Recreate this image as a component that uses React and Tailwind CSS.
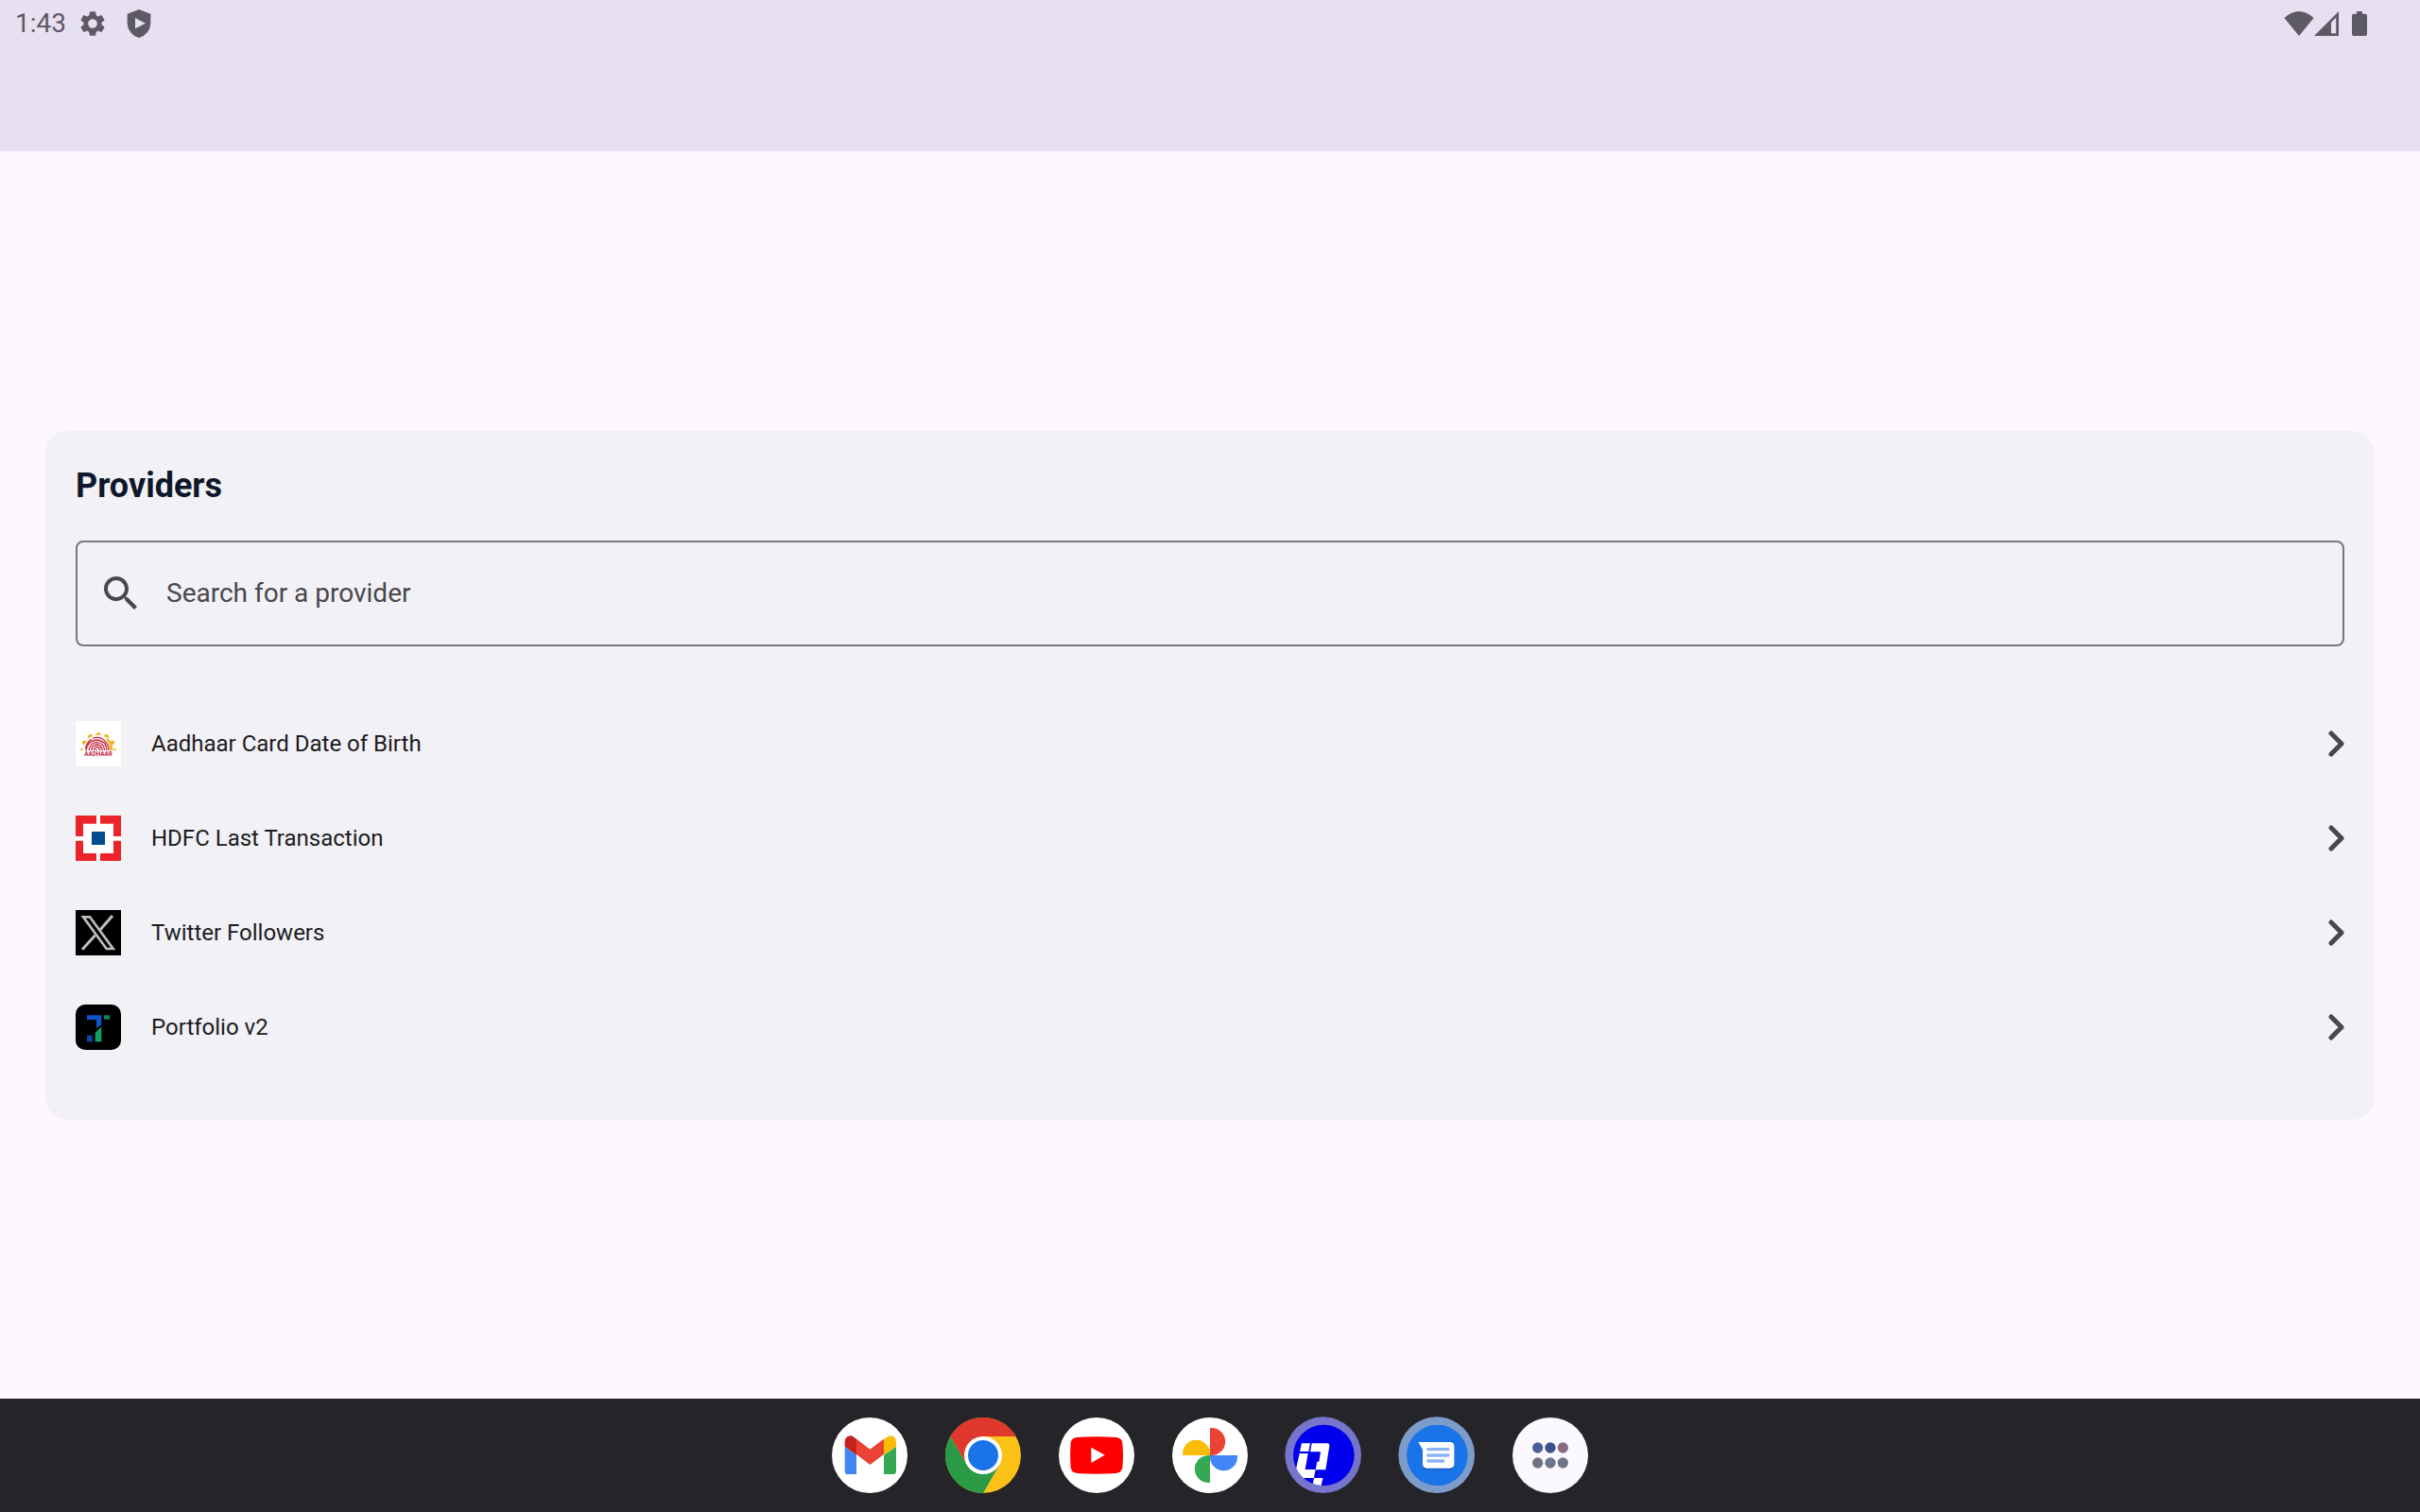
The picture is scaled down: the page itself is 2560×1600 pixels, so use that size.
import React, { useState } from 'react';

const AadhaarLogo = () => (
  <svg viewBox="0 0 144 144" className="size-12 shrink-0" aria-hidden="true">
    <rect width="144" height="144" fill="#fff" />
    <g fill="#f0b62c">
      <path d="M62 44q0-4 5-4q1-5 5-5t5 5q5 0 5 4z" />
      <path d="M38 55q0-12 8-13t8 7z" />
      <path d="M106 55q0-12-8-13t-8 7z" />
      <path d="M26 77q-8-8-5-13q4-3 15 0z" />
      <path d="M118 77q8-8 5-13q-4-3-15 0z" />
      <path d="M13 93l7-8 4 8z" />
      <path d="M131 93l-7-8-4 8z" />
      <path d="M102 55q15 14 17 38h-10q0-22-13-36z" />
    </g>
    <g fill="none" stroke="#c4283c" strokeWidth="4">
      <path d="M31 88q4-20 19-30M54 55q24-9 40 9q11 13 11 29" />
      <path d="M33 94q5-32 34-34q30 2 32 33" />
      <path d="M42 93q5-25 26-25q21 1 24 25" />
      <path d="M50 93q4-18 17-18q15 1 18 18" />
      <path d="M58 93q3-11 10-11q8 1 10 11" />
      <path d="M66 94v-5" />
    </g>
    <text x="72" y="111" textAnchor="middle" fontSize="19" fontWeight="700" fontFamily="Roboto, sans-serif" fill="#c4283c">AADHAAR</text>
  </svg>
);

const HdfcLogo = () => (
  <svg viewBox="0 0 144 144" className="size-12 shrink-0" aria-hidden="true">
    <rect width="144" height="144" fill="#ed232a" />
    <rect x="24" y="26" width="96" height="94" fill="#fff" />
    <path d="M66 0h12v144H66zM0 66h144v14H0z" fill="#fff" />
    <rect x="51" y="51" width="42" height="42" fill="#004c8f" />
  </svg>
);

const XLogo = () => (
  <svg viewBox="0 0 144 144" className="size-12 shrink-0" aria-hidden="true">
    <rect width="144" height="144" fill="#000" />
    <g fill="none" stroke="#bdbdbd" strokeWidth="8">
      <path d="M24 22h21l74 101H98z" />
      <path d="M117 18L77 64M62 80L21 125" strokeWidth="9" />
    </g>
  </svg>
);

const PortfolioLogo = () => (
  <svg viewBox="0 0 144 144" className="size-12 shrink-0" aria-hidden="true">
    <rect width="144" height="144" rx="30" fill="#000" />
    <path d="M36 34h46v30L66 76V48H36z" fill="#0b55cf" />
    <path d="M82 70v48H62V90z" fill="#12a25f" />
    <rect x="90" y="34" width="18" height="13" fill="#0b8a50" />
    <rect x="36" y="98" width="17" height="20" fill="#0d48ae" />
  </svg>
);

const providers = [
  { name: 'Aadhaar Card Date of Birth', Logo: AadhaarLogo },
  { name: 'HDFC Last Transaction', Logo: HdfcLogo },
  { name: 'Twitter Followers', Logo: XLogo },
  { name: 'Portfolio v2', Logo: PortfolioLogo },
];

const GmailIcon = () => (
  <svg viewBox="0 0 240 240" className="size-20" aria-hidden="true">
    <circle cx="120" cy="120" r="120" fill="#fff" />
    <path d="M41 92l37 27v61H51q-10 0-10-10z" fill="#4285f4" />
    <path d="M204 92l-39 27v61h28q11 0 11-10z" fill="#34a853" />
    <path d="M78 68l43 33 44-33v49l-44 33-43-33z" fill="#ea4335" />
    <path d="M41 92V76q1-16 17-18q7 0 12 4l8 6v51z" fill="#c5221f" />
    <path d="M204 92V76q-1-16-17-18q-7 0-12 4l-10 7v50z" fill="#fbbc04" />
  </svg>
);

const ChromeIcon = () => (
  <svg viewBox="0 0 240 240" className="size-20" aria-hidden="true">
    <circle cx="120" cy="120" r="120" fill="#fbc116" />
    <path d="M16 60A120 120 0 0 1 224 60H120L68 150z" fill="#e0382c" />
    <path d="M16 60A120 120 0 0 0 120 240L172 150H68z" fill="#2b9a47" />
    <circle cx="120" cy="120" r="60" fill="#fff" />
    <circle cx="120" cy="120" r="48" fill="#1a73e8" />
  </svg>
);

const YoutubeIcon = () => (
  <svg viewBox="0 0 240 240" className="size-20" aria-hidden="true">
    <circle cx="120" cy="120" r="120" fill="#fff" />
    <path d="M58 63q62-4 124 0q18 1 20 18q4 39 0 78q-2 16-20 18q-62 4-124 0q-18-2-20-18q-3-39 0-78q2-17 20-18z" fill="#f00" />
    <path d="M103 95l43 24-43 25z" fill="#fff" />
  </svg>
);

const PhotosIcon = () => (
  <svg viewBox="0 0 240 240" className="size-20" aria-hidden="true">
    <circle cx="120" cy="120" r="120" fill="#fff" />
    <path d="M120 120V33h5a43 43 0 0 1 0 87z" fill="#ea4335" />
    <path d="M120 120V33h5a43 43 0 0 1 0 87z" fill="#4285f4" transform="rotate(90 120 120)" />
    <path d="M120 120V33h5a43 43 0 0 1 0 87z" fill="#34a853" transform="rotate(180 120 120)" />
    <path d="M120 120V33h5a43 43 0 0 1 0 87z" fill="#fbbc04" transform="rotate(270 120 120)" />
  </svg>
);

const PortalIcon = () => (
  <svg viewBox="0 0 240 240" className="size-20 overflow-visible" aria-hidden="true">
    <clipPath id="portal">
      <circle cx="121" cy="120" r="97" />
    </clipPath>
    <circle cx="119" cy="119" r="121" fill="#7774cc" />
    <circle cx="121" cy="120" r="97" fill="#0000ee" />
    <g fill="#fff" clipPath="url(#portal)">
      <path d="M51 82h27l-5 26H45z" />
      <path d="M83 82h49q8 0 7 9l-12 75H95l5-26h6l5-31H78z" />
      <path d="M44 114h27l-9 51h33l-5 27H58l-6 30H20z" />
      <path d="M90 192h28l-6 30H84z" />
    </g>
  </svg>
);

const MessagesIcon = () => (
  <svg viewBox="0 0 240 240" className="size-20 overflow-visible" aria-hidden="true">
    <circle cx="119" cy="119" r="121" fill="#7c9dcb" />
    <circle cx="121" cy="120" r="97" fill="#1a73e8" />
    <path d="M63 84h98q13 0 13 13v56q0 13-13 13H89q-13 0-13-13v-45z" fill="#155cbc" />
    <path d="M61 78h100q14 0 14 14v55q0 14-14 14H89q-14 0-14-14v-44z" fill="#fff" />
    <g stroke="#8ab4f8" strokeWidth="10" strokeLinecap="round">
      <path d="M92 101h64M92 120h64M92 138h48" />
    </g>
  </svg>
);

const AllAppsIcon = () => (
  <svg viewBox="0 0 240 240" className="size-20" aria-hidden="true">
    <circle cx="120" cy="120" r="120" fill="#fcf8ff" />
    <circle cx="80" cy="96" r="17" fill="#4c5f98" />
    <circle cx="120" cy="96" r="17" fill="#3d5189" />
    <circle cx="160" cy="96" r="17" fill="#896c84" />
    <circle cx="80" cy="144" r="17" fill="#717385" />
    <circle cx="120" cy="144" r="17" fill="#6b7690" />
    <circle cx="160" cy="144" r="17" fill="#717385" />
  </svg>
);

const dockApps = [
  { name: 'Gmail', Icon: GmailIcon },
  { name: 'Chrome', Icon: ChromeIcon },
  { name: 'YouTube', Icon: YoutubeIcon },
  { name: 'Photos', Icon: PhotosIcon },
  { name: 'Portal', Icon: PortalIcon },
  { name: 'Messages', Icon: MessagesIcon },
  { name: 'All apps', Icon: AllAppsIcon },
];

const StatusBar = () => (
  <header className="h-40 bg-[#e6e0f0] text-[#5e5966]">
    <div className="flex h-[50px] items-center justify-between pl-4 pr-14">
      <div className="flex items-center">
        <span className="text-[28px] leading-8">1:43</span>
        <svg viewBox="0 0 24 24" className="ml-3 size-8" fill="currentColor" aria-hidden="true">
          <path d="M19.14 12.94c.04-.3.06-.61.06-.94s-.02-.64-.07-.94l2.03-1.58c.18-.14.23-.41.12-.61l-1.92-3.32c-.12-.22-.37-.29-.59-.22l-2.39.96c-.5-.38-1.03-.7-1.62-.94l-.36-2.54c-.04-.24-.24-.41-.48-.41h-3.84c-.24 0-.43.17-.47.41l-.36 2.54c-.59.24-1.13.57-1.62.94l-2.39-.96c-.22-.08-.47 0-.59.22L2.74 8.87c-.12.21-.08.47.12.61l2.03 1.58c-.05.3-.09.63-.09.94s.02.64.07.94l-2.03 1.58c-.18.14-.23.41-.12.61l1.92 3.32c.12.22.37.29.59.22l2.39-.96c.5.38 1.03.7 1.62.94l.36 2.54c.05.24.24.41.48.41h3.84c.24 0 .44-.17.47-.41l.36-2.54c.59-.24 1.13-.56 1.62-.94l2.39.96c.22.08.47 0 .59-.22l1.92-3.32c.12-.22.07-.47-.12-.61zM12 15.6c-1.98 0-3.6-1.62-3.6-3.6s1.62-3.6 3.6-3.6 3.6 1.62 3.6 3.6-1.62 3.6-3.6 3.6z" />
        </svg>
        <svg viewBox="0 0 74 90" className="ml-5 h-[30px] w-[26px]" fill="currentColor" aria-hidden="true">
          <path fillRule="evenodd" d="M37 0L74 14v30q-2 34-37 46Q2 78 0 44V14zM25 27v34l33-17z" />
        </svg>
      </div>
      <div className="flex items-center">
        <svg viewBox="0 0 90 75" className="h-[26px] w-8" fill="currentColor" aria-hidden="true">
          <path d="M0 20Q45-20 90 20L45 75z" />
        </svg>
        <svg viewBox="0 0 75 75" className="size-[26px]" fill="currentColor" aria-hidden="true">
          <path fillRule="evenodd" d="M75 0v75H0zM67 19L52 34v33h15z" />
        </svg>
        <svg viewBox="0 0 48 78" className="ml-3.5 h-[26px] w-4" fill="currentColor" aria-hidden="true">
          <path d="M15 0h18v8h9q6 0 6 6v58q0 6-6 6H6q-6 0-6-6V14q0-6 6-6h9z" />
        </svg>
      </div>
    </div>
  </header>
);

const App = () => {
  const [query, setQuery] = useState('');
  const filtered = providers.filter((p) => p.name.toLowerCase().includes(query.toLowerCase()));

  return (
    <div className="flex min-h-screen flex-col bg-[#fef7ff] font-['Roboto',sans-serif]">
      <StatusBar />

      <main className="flex flex-1 flex-col justify-center px-12">
        <section className="rounded-3xl bg-[#f1f1f6] px-8 pt-8 pb-12">
          <h1 className="text-4xl leading-[52px] font-bold text-[#0f172a]">Providers</h1>

          {/* Search */}
          <label className="mt-8 flex h-28 items-center gap-6 rounded-lg border-2 border-[#79777f] px-[22px]">
            <svg viewBox="0 0 24 24" className="size-12 shrink-0" fill="#49474d" aria-hidden="true">
              <path d="M15.5 14h-.79l-.28-.27C15.41 12.59 16 11.11 16 9.5 16 5.91 13.09 3 9.5 3S3 5.91 3 9.5 5.91 16 9.5 16c1.61 0 3.09-.59 4.23-1.57l.27.28v.79l5 4.99L20.49 19l-4.99-5zm-6 0C7.01 14 5 11.99 5 9.5S7.01 5 9.5 5 14 7.01 14 9.5 11.99 14 9.5 14z" />
            </svg>
            <input
              type="text"
              aria-label="Search for a provider"
              placeholder="Search for a provider"
              value={query}
              onChange={(e) => setQuery(e.target.value)}
              className="min-w-0 flex-1 bg-transparent text-[28px] leading-10 text-[#1d1b20] outline-none placeholder:text-[#49474d]"
            />
          </label>

          {/* Provider list */}
          <ul className="mt-[53px]">
            {filtered.map(({ name, Logo }) => (
              <li key={name}>
                <button type="button" className="flex h-[100px] w-full items-center gap-8 text-left">
                  <Logo />
                  <span className="flex-1 text-2xl text-[#1d1b20]">{name}</span>
                  <svg viewBox="0 0 18 28" className="h-7 w-[18px]" fill="none" stroke="#49474d" strokeWidth="5" strokeLinecap="round" strokeLinejoin="round" aria-hidden="true">
                    <path d="M4 3l11 11L4 25" />
                  </svg>
                </button>
              </li>
            ))}
          </ul>
        </section>
      </main>

      <nav className="flex h-[120px] items-center justify-center gap-10 bg-[#252529]">
        {dockApps.map(({ name, Icon }) => (
          <button key={name} type="button" aria-label={name} className="rounded-full">
            <Icon />
          </button>
        ))}
      </nav>
    </div>
  );
};

export default App;
